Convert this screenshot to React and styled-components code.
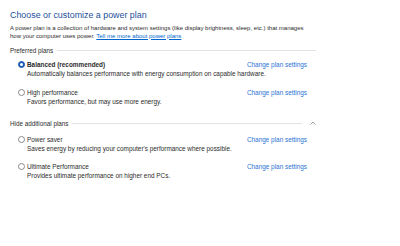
import styled, { createGlobalStyle } from 'styled-components';

const GlobalStyle = createGlobalStyle`
  * { margin: 0; padding: 0; box-sizing: border-box; }
  body {
    background: #ffffff;
    font-family: "Liberation Sans", Arial, sans-serif;
    color: #2b2b2b;
  }
`;

const Page = styled.div`
  width: 400px;
  height: 246px;
  padding: 9px 0 0 10px;
  background: #fff;
`;

const Content = styled.div`
  width: 306px;
`;

const Title = styled.h1`
  font-size: 8.9px;
  font-weight: normal;
  line-height: 12px;
  color: #1e4f9c;
  white-space: nowrap;
`;

const Intro = styled.p`
  margin-top: 4px;
  font-size: 6px;
  line-height: 7.5px;
  color: #2b2b2b;
  white-space: nowrap;
`;

const InlineLink = styled.a`
  color: #0066cc;
  text-decoration: underline;
`;

const SectionHeader = styled.div`
  display: flex;
  align-items: center;
  gap: 4px;
  margin-top: ${(p) => p.$top || 0}px;
  height: 10px;
  font-size: 6.3px;
  color: #2b2b2b;
  white-space: nowrap;
`;

const Rule = styled.div`
  flex: 1;
  height: 1px;
  background: #e3e3e3;
`;

const Chevron = styled.svg`
  margin-left: 4px;
  width: 6px;
  height: 4px;
  flex: none;
`;

const Plan = styled.div`
  margin-top: ${(p) => p.$top || 0}px;
  padding-left: 8px;
`;

const PlanRow = styled.div`
  display: flex;
  align-items: center;
  height: 10px;
  font-size: 6.4px;
  white-space: nowrap;
`;

const Radio = styled.span`
  width: 7px;
  height: 7px;
  border-radius: 50%;
  flex: none;
  margin-right: 2px;
  border: 1px solid ${(p) => (p.$checked ? '#1f5bb8' : '#8a8a8a')};
  background: ${(p) => (p.$checked ? '#1f5bb8' : '#fff')};
  display: flex;
  align-items: center;
  justify-content: center;

  &::after {
    content: '';
    display: ${(p) => (p.$checked ? 'block' : 'none')};
    width: 3px;
    height: 3px;
    border-radius: 50%;
    background: #fff;
  }
`;

const PlanName = styled.span`
  font-weight: ${(p) => (p.$bold ? 'bold' : 'normal')};
  color: #2b2b2b;
`;

const ChangeLink = styled.a`
  margin-left: auto;
  margin-right: 9px;
  color: #2a74d4;
  text-decoration: none;
`;

const PlanDesc = styled.div`
  margin-top: 1px;
  padding-left: 9px;
  font-size: 6.4px;
  line-height: 8px;
  color: #2b2b2b;
  white-space: nowrap;
`;

function PlanItem({ name, desc, checked, top }) {
  return (
    <Plan $top={top}>
      <PlanRow>
        <Radio $checked={checked} />
        <PlanName $bold={checked}>{name}</PlanName>
        <ChangeLink>Change plan settings</ChangeLink>
      </PlanRow>
      <PlanDesc>{desc}</PlanDesc>
    </Plan>
  );
}

export default function App() {
  return (
    <Page>
      <GlobalStyle />
      <Content>
        <Title>Choose or customize a power plan</Title>
        <Intro>
          A power plan is a collection of hardware and system settings (like display brightness, sleep, etc.) that manages
          <br />
          how your computer uses power. <InlineLink>Tell me more about power plans</InlineLink>
        </Intro>

        <SectionHeader $top={5}>
          Preferred plans
          <Rule />
        </SectionHeader>
        <PlanItem
          top={4}
          checked
          name="Balanced (recommended)"
          desc="Automatically balances performance with energy consumption on capable hardware."
        />
        <PlanItem
          top={9}
          name="High performance"
          desc="Favors performance, but may use more energy."
        />

        <SectionHeader $top={12}>
          Hide additional plans
          <Rule />
          <Chevron viewBox="0 0 6 4">
            <path d="M0.5 3.5 L3 1 L5.5 3.5" fill="none" stroke="#8a8a8a" strokeWidth="0.8" />
          </Chevron>
        </SectionHeader>
        <PlanItem
          top={6}
          name="Power saver"
          desc="Saves energy by reducing your computer's performance where possible."
        />
        <PlanItem
          top={8}
          name="Ultimate Performance"
          desc="Provides ultimate performance on higher end PCs."
        />
      </Content>
    </Page>
  );
}
